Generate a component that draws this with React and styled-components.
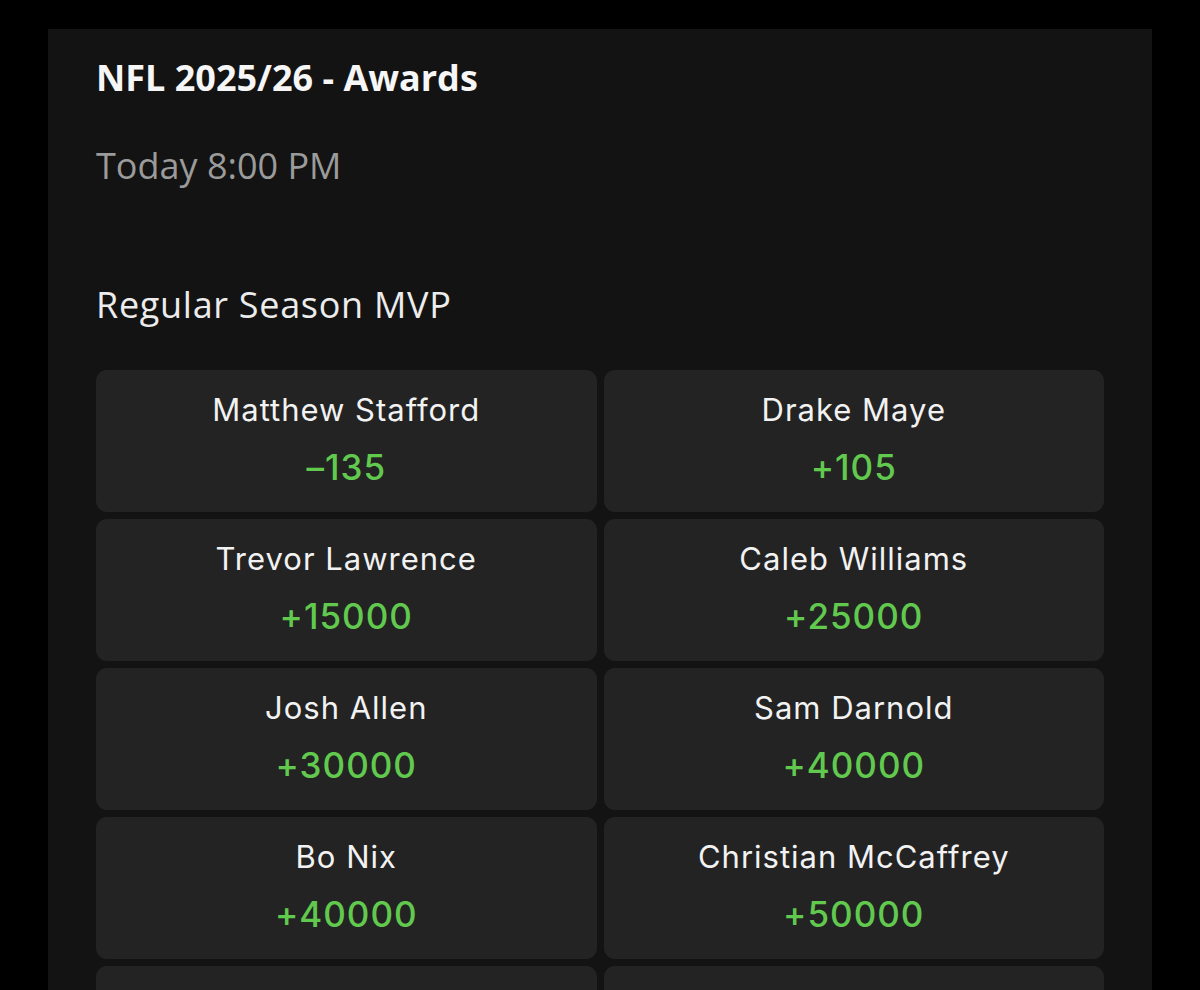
import React from 'react';
import styled, { createGlobalStyle } from 'styled-components';

const GlobalStyle = createGlobalStyle`
  html, body {
    margin: 0;
    padding: 0;
    background: #000;
  }
  body {
    font-family: "Open Sans", "Liberation Sans", sans-serif;
    -webkit-font-smoothing: antialiased;
  }
`;

const Page = styled.div`
  width: 1200px;
  height: 990px;
  overflow: hidden;
  background: #000;
  padding: 29px 48px 0;
  box-sizing: border-box;
`;

const Panel = styled.div`
  background: #131313;
  min-height: 1000px;
  padding: 22px 48px 0;
`;

const Title = styled.h1`
  margin: 0;
  font-size: 36px;
  font-weight: 700;
  line-height: 54px;
  color: #f6f6f6;
`;

const Time = styled.div`
  margin-top: 37px;
  font-size: 36px;
  font-weight: 400;
  line-height: 48px;
  color: #9b9b9b;
`;

const Market = styled.h2`
  margin: 91px 0 0;
  font-size: 36px;
  font-weight: 400;
  letter-spacing: 0.7px;
  line-height: 48px;
  color: #ececec;
`;

const Grid = styled.div`
  margin-top: 41px;
  display: grid;
  grid-template-columns: 1fr 1fr;
  gap: 7px;
`;

const Card = styled.button`
  height: 142px;
  border: none;
  border-radius: 11px;
  background: #232323;
  display: flex;
  flex-direction: column;
  align-items: center;
  justify-content: center;
  gap: 16px;
  padding: 0 0 4px;
  font-family: Inter, Roboto, "Liberation Sans", sans-serif;
`;

const Name = styled.span`
  font-size: 31px;
  font-weight: 400;
  line-height: 40px;
  letter-spacing: 1px;
  color: #f2f2f2;
`;

const Odds = styled.strong`
  font-size: 35px;
  font-weight: 500;
  line-height: 42px;
  letter-spacing: 1px;
  color: #62c94f;
`;

const players = [
  ['Matthew Stafford', '\u2013135'],
  ['Drake Maye', '+105'],
  ['Trevor Lawrence', '+15000'],
  ['Caleb Williams', '+25000'],
  ['Josh Allen', '+30000'],
  ['Sam Darnold', '+40000'],
  ['Bo Nix', '+40000'],
  ['Christian McCaffrey', '+50000'],
  [null, null],
  [null, null],
];

export default function App() {
  return (
    <>
      <GlobalStyle />
      <Page>
        <Panel>
          <Title>NFL 2025/26 - Awards</Title>
          <Time>Today 8:00 PM</Time>
          <Market>Regular Season MVP</Market>
          <Grid>
            {players.map(([name, odds], i) => (
              <Card key={i}>
                {name && <Name>{name}</Name>}
                {odds && <Odds>{odds}</Odds>}
              </Card>
            ))}
          </Grid>
        </Panel>
      </Page>
    </>
  );
}
